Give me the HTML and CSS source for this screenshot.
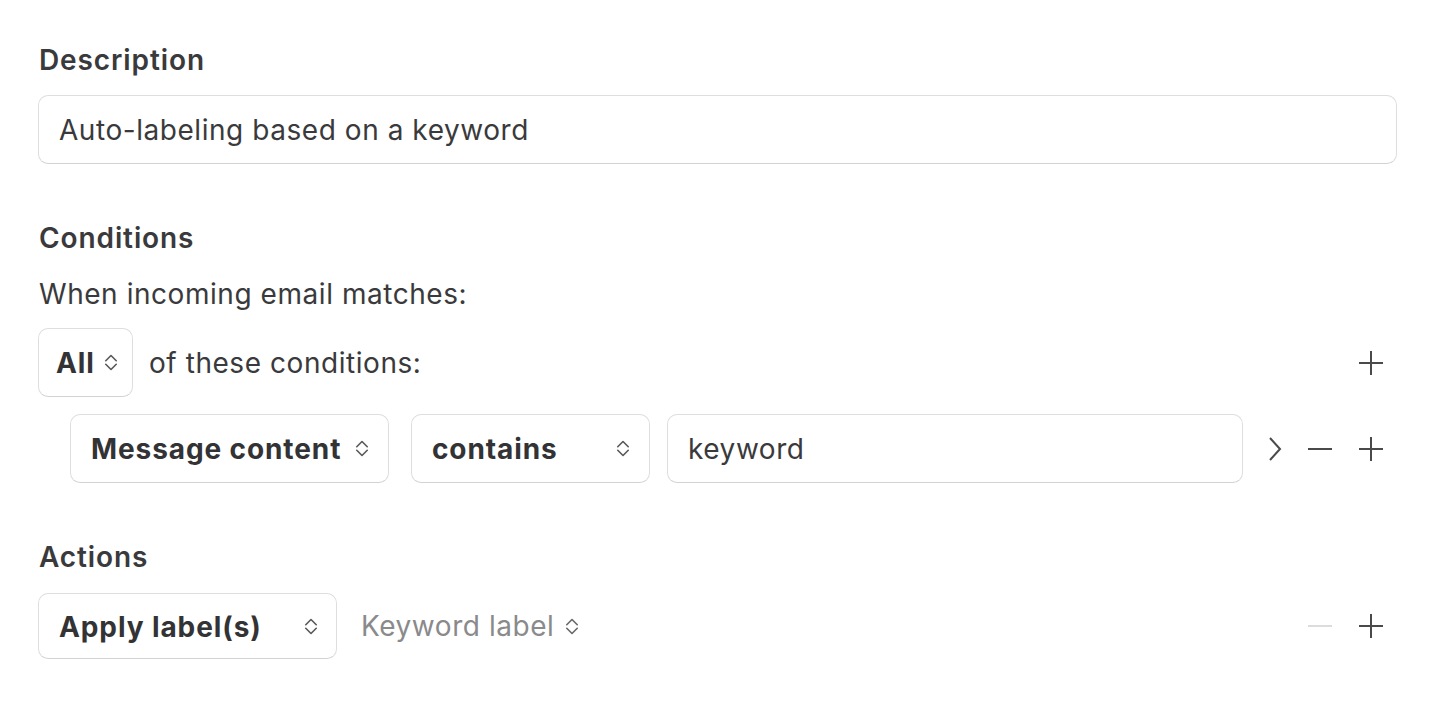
FILE: index.html
```html
<!DOCTYPE html>
<html lang="en">
<head>
<meta charset="utf-8">
<title>Rule</title>
<link rel="stylesheet" href="styles.css">
</head>
<body>
<main class="form">
  <section class="section">
    <h2 class="label">Description</h2>
    <div class="field text-field">Auto-labeling based on a keyword</div>
  </section>

  <section class="section">
    <h2 class="label">Conditions</h2>
    <p class="hint">When incoming email matches:</p>
    <div class="row">
      <div class="field select select-all"><span class="val">All</span>
        <svg class="updown" viewBox="0 0 12 18"><path d="M1.5 7.5 6 3 10.5 7.5M1.5 10.5 6 15 10.5 10.5"/></svg>
      </div>
      <span class="row-text">of these conditions:</span>
      <span class="spacer"></span>
      <div class="icons">
        <span class="icon"><svg viewBox="0 0 26 26"><path d="M13 1v24M1 13h24"/></svg></span>
      </div>
    </div>
    <div class="row cond-row">
      <div class="field select select-msg"><span class="val">Message content</span>
        <svg class="updown" viewBox="0 0 12 18"><path d="M1.5 7.5 6 3 10.5 7.5M1.5 10.5 6 15 10.5 10.5"/></svg>
      </div>
      <div class="field select select-op"><span class="val">contains</span>
        <svg class="updown" viewBox="0 0 12 18"><path d="M1.5 7.5 6 3 10.5 7.5M1.5 10.5 6 15 10.5 10.5"/></svg>
      </div>
      <div class="field text-field keyword">keyword</div>
      <div class="icons">
        <span class="icon chev"><svg viewBox="0 0 26 26"><path d="M8 2l10 11-10 11"/></svg></span>
        <span class="icon"><svg viewBox="0 0 26 26"><path d="M1 13h24"/></svg></span>
        <span class="icon"><svg viewBox="0 0 26 26"><path d="M13 1v24M1 13h24"/></svg></span>
      </div>
    </div>
  </section>

  <section class="section">
    <h2 class="label">Actions</h2>
    <div class="row action-row">
      <div class="field select select-apply"><span class="val">Apply label(s)</span>
        <svg class="updown" viewBox="0 0 12 18"><path d="M1.5 7.5 6 3 10.5 7.5M1.5 10.5 6 15 10.5 10.5"/></svg>
      </div>
      <div class="plain-select"><span>Keyword label</span>
        <svg class="updown" viewBox="0 0 12 18"><path d="M1.5 7.5 6 3 10.5 7.5M1.5 10.5 6 15 10.5 10.5"/></svg>
      </div>
      <span class="spacer"></span>
      <div class="icons">
        <span class="icon disabled"><svg viewBox="0 0 26 26"><path d="M1 13h24"/></svg></span>
        <span class="icon"><svg viewBox="0 0 26 26"><path d="M13 1v24M1 13h24"/></svg></span>
      </div>
    </div>
  </section>
</main>
</body>
</html>
```

FILE: styles.css
```css
* { box-sizing: border-box; }
html, body { margin: 0; padding: 0; background: #fff; }
body {
  font-family: Inter, "Noto Sans", "Liberation Sans", sans-serif;
  color: #3a3a3c;
  font-size: 28px;
  line-height: 32px;
  letter-spacing: 0.55px;
}
.form {
  padding: 44px 40px 0 38px;
  display: flex;
  flex-direction: column;
  gap: 58px;
}
.section { display: flex; flex-direction: column; }
.label {
  margin: 0;
  font-size: 28px;
  line-height: 32px;
  font-weight: 600;
  letter-spacing: 0.9px;
  color: #3a3a3c;
  padding-left: 1px;
}
.hint {
  margin: 24px 0 0;
  padding-left: 1px;
  font-weight: 400;
}
.field {
  border: 1.5px solid #dedede;
  border-bottom-color: #d2d2d2;
  border-radius: 10px;
  background: #fff;
  height: 69px;
  display: flex;
  align-items: center;
}
.text-field {
  padding: 0 20px;
}
.section > .text-field { margin-top: 19px; }
.row {
  display: flex;
  align-items: center;
  margin-top: 18px;
}
.cond-row {
  margin-top: 17px;
  padding-left: 32px;
}
.action-row { margin-top: 20px; }
.select {
  padding: 0 19px 0 20px;
  font-weight: 700;
  letter-spacing: 0.9px;
  color: #333335;
  justify-content: space-between;
}
.select-all { padding: 0 14px 0 17px; }
.select .val { margin-top: 1px; }
.updown {
  width: 14px;
  height: 21px;
  fill: none;
  stroke: #5a5a5c;
  stroke-width: 1.4;
  stroke-linecap: round;
  stroke-linejoin: round;
  flex: none;
}
.select-all { width: 95px; }
.select-msg { width: 319px; margin-right: 22px; }
.select-op { width: 239px; margin-right: 17px; }
.select-apply { width: 299px; height: 66px; padding-right: 18px; }
.keyword { flex: 1; }
.row-text { margin-left: 16px; }
.spacer { flex: 1; }
.plain-select {
  margin-left: 24px;
  display: flex;
  align-items: center;
  gap: 11px;
  color: #8a8a8c;
}
.plain-select .updown { stroke: #6a6a6c; }
.icons {
  display: flex;
  align-items: center;
  gap: 21px;
  margin-right: 11px;
}
.cond-row .icons { margin-left: 17px; }
.icon {
  width: 30px;
  height: 30px;
  display: flex;
  align-items: center;
  justify-content: center;
}
.icon svg {
  width: 26px;
  height: 26px;
  fill: none;
  stroke: #4a4a4c;
  stroke-width: 2;
}
.chev { margin-right: -6px; }
.icon.disabled svg { stroke: #dcdcdc; }
```
